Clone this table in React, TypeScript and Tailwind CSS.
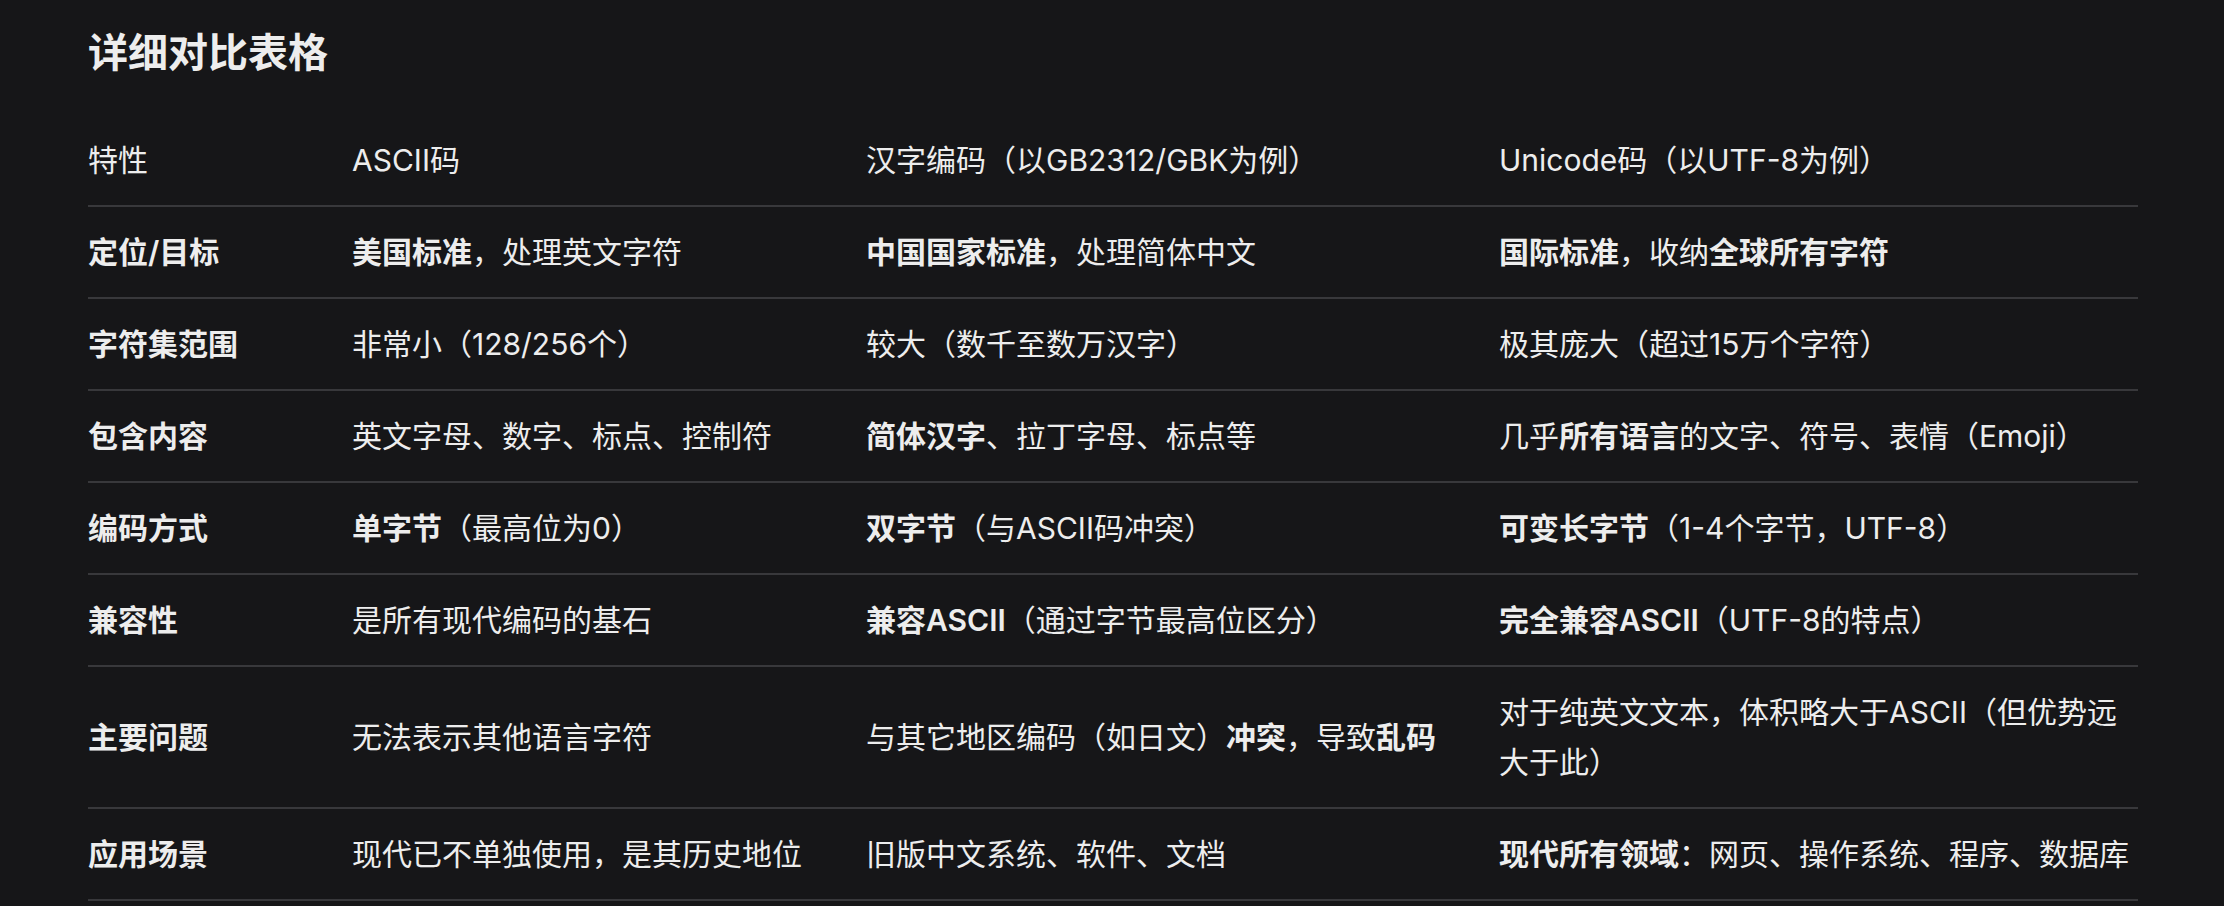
import React from "react";

type Cell = React.ReactNode;

const B = ({ children }: { children: React.ReactNode }) => (
  <span className="font-semibold">{children}</span>
);

const rows: { label: string; cells: Cell[] }[] = [
  {
    label: "定位/目标",
    cells: [
      <><B>美国标准</B>，处理英文字符</>,
      <><B>中国国家标准</B>，处理简体中文</>,
      <><B>国际标准</B>，收纳<B>全球所有字符</B></>,
    ],
  },
  {
    label: "字符集范围",
    cells: [
      <>非常小（128/256个）</>,
      <>较大（数千至数万汉字）</>,
      <>极其庞大（超过15万个字符）</>,
    ],
  },
  {
    label: "包含内容",
    cells: [
      <>英文字母、数字、标点、控制符</>,
      <><B>简体汉字</B>、拉丁字母、标点等</>,
      <>几乎<B>所有语言</B>的文字、符号、表情（Emoji）</>,
    ],
  },
  {
    label: "编码方式",
    cells: [
      <><B>单字节</B>（最高位为0）</>,
      <><B>双字节</B>（与ASCII码冲突）</>,
      <><B>可变长字节</B>（1-4个字节，UTF-8）</>,
    ],
  },
  {
    label: "兼容性",
    cells: [
      <>是所有现代编码的基石</>,
      <><B>兼容ASCII</B>（通过字节最高位区分）</>,
      <><B>完全兼容ASCII</B>（UTF-8的特点）</>,
    ],
  },
  {
    label: "主要问题",
    cells: [
      <>无法表示其他语言字符</>,
      <>与其它地区编码（如日文）<B>冲突</B>，导致<B>乱码</B></>,
      <>对于纯英文文本，体积略大于ASCII（但优势远大于此）</>,
    ],
  },
  {
    label: "应用场景",
    cells: [
      <>现代已不单独使用，是其历史地位</>,
      <>旧版中文系统、软件、文档</>,
      <><B>现代所有领域</B>：网页、操作系统、程序、数据库</>,
    ],
  },
];

export default function App() {
  return (
    <div
      className="min-h-[906px] w-full bg-[#161618] text-[#ededed] pl-[88px] pr-[86px] pt-[29px]"
      style={{ fontFamily: 'Inter, "Noto Sans CJK SC", sans-serif' }}
    >
      <h1 className="text-[40px] leading-[48px] font-semibold mb-[38px]">详细对比表格</h1>
      <table className="w-[2050px] table-fixed text-[30px] leading-[50px]">
        <colgroup>
          <col className="w-[264px]" />
          <col className="w-[514px]" />
          <col className="w-[633px]" />
          <col className="w-[639px]" />
        </colgroup>
        <thead>
          <tr className="border-b-2 border-[#38383b]">
            {["特性", "ASCII码", "汉字编码（以GB2312/GBK为例）", "Unicode码（以UTF-8为例）"].map((h, i) => (
              <th
                key={h}
                className={`py-5 text-left font-normal align-middle ${i === 3 ? "pr-0" : "pr-5"}`}
              >
                {h}
              </th>
            ))}
          </tr>
        </thead>
        <tbody>
          {rows.map((r) => (
            <tr key={r.label} className="border-b-2 border-[#38383b]">
              <td className="py-5 pr-5 font-semibold align-middle">{r.label}</td>
              {r.cells.map((c, i) => (
                <td key={i} className={`py-5 align-middle ${i === 2 ? "pr-0" : "pr-5"}`}>
                  {c}
                </td>
              ))}
            </tr>
          ))}
        </tbody>
      </table>
    </div>
  );
}
